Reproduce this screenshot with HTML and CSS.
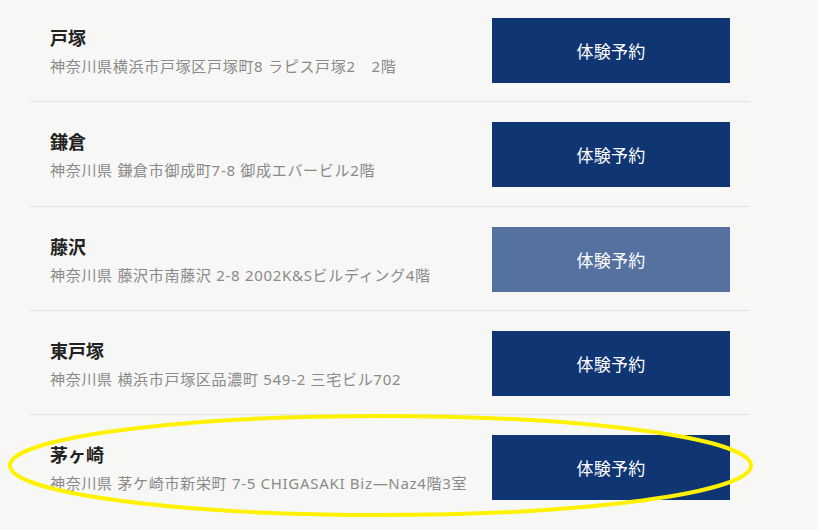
FILE: index.html
```html
<!DOCTYPE html>
<html lang="ja">
<head>
  <meta charset="UTF-8" />
  <meta name="viewport" content="width=device-width, initial-scale=1" />
  <title>教室一覧</title>
  <link rel="stylesheet" href="styles.css">
</head>
<body>
  <ul class="schools">
    <li class="school">
      <div class="school-info">
        <div class="school-name">戸塚</div>
        <div class="school-address">神奈川県横浜市戸塚区戸塚町8 ラピス戸塚2　2階</div>
      </div>
      <a class="btn-trial" href="#">体験予約</a>
    </li>
    <li class="school">
      <div class="school-info">
        <div class="school-name">鎌倉</div>
        <div class="school-address">神奈川県 鎌倉市御成町7-8 御成エバービル2階</div>
      </div>
      <a class="btn-trial" href="#">体験予約</a>
    </li>
    <li class="school">
      <div class="school-info">
        <div class="school-name">藤沢</div>
        <div class="school-address">神奈川県 藤沢市南藤沢 2-8 2002K&amp;Sビルディング4階</div>
      </div>
      <a class="btn-trial is-hover" href="#">体験予約</a>
    </li>
    <li class="school">
      <div class="school-info">
        <div class="school-name">東戸塚</div>
        <div class="school-address">神奈川県 横浜市戸塚区品濃町 549-2 三宅ビル702</div>
      </div>
      <a class="btn-trial" href="#">体験予約</a>
    </li>
    <li class="school">
      <div class="school-info">
        <div class="school-name">茅ヶ崎</div>
        <div class="school-address">神奈川県 茅ケ崎市新栄町 7-5 CHIGASAKI Biz—Naz4階3室</div>
      </div>
      <a class="btn-trial" href="#">体験予約</a>
      <!-- 手書きの丸囲み -->
      <svg class="mark" width="745" height="103" viewBox="0 0 745 103">
        <ellipse cx="372.5" cy="51.5" rx="370.5" ry="49.5" fill="none" stroke="#fff200" stroke-width="4" />
      </svg>
    </li>
  </ul>
</body>
</html>
```

FILE: styles.css
```css
body {
  margin: 0;
  font-family: "Noto Sans", "Noto Sans CJK JP", sans-serif;
  background: #f7f7f5;
  overflow: hidden;
}

.schools {
  list-style: none;
  margin: -2px 0 0 30px;
  padding: 0;
  width: 720px;
}

.school {
  position: relative;
  display: flex;
  align-items: center;
  justify-content: space-between;
  padding: 20px 20px 18.25px;
  border-bottom: 1px solid #e1e1e0;
}

.school:last-child {
  border-bottom: none;
}

.school-info {
  padding-top: 3px;
}

.school-name {
  font-size: 18px;
  font-weight: bold;
  line-height: 24px;
  color: #222;
}

.school-address {
  margin-top: 4px;
  font-size: 15px;
  line-height: 24px;
  letter-spacing: 0.7px;
  color: #8a8a8a;
}

.btn-trial {
  display: flex;
  align-items: center;
  justify-content: center;
  width: 238px;
  height: 65px;
  flex-shrink: 0;
  background: #0f3573;
  color: #fff;
  font-size: 17px;
  letter-spacing: 0.3px;
  text-decoration: none;
}

.btn-trial.is-hover {
  background: #5571a0;
}

.mark {
  position: absolute;
  left: -22px;
  top: -1px;
  pointer-events: none;
}
```
